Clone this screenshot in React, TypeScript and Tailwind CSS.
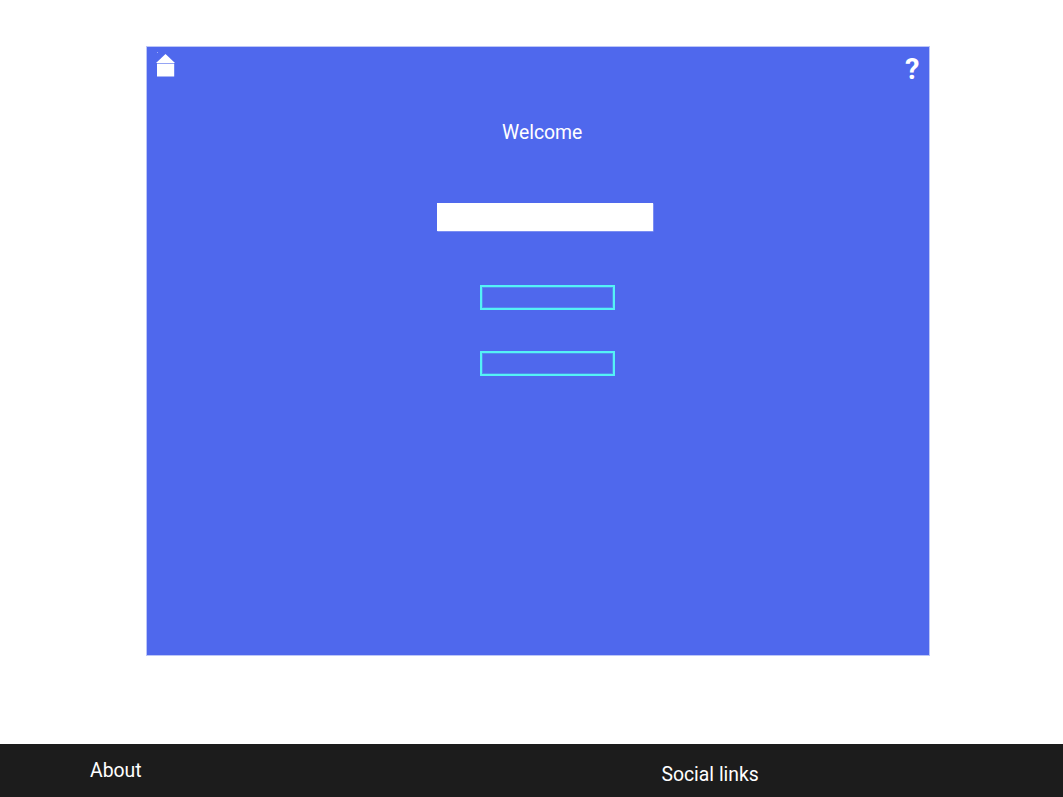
export default function App() {
  return (
    <div className="flex h-[797px] w-[1063px] flex-col overflow-hidden bg-white font-['Roboto',sans-serif] text-white">
      <main className="mt-[47px] ml-[147px] flex h-[608px] w-[782px] flex-col bg-[#4f68ed] shadow-[0_0_0_1px_#bcc6f8]">
        <header className="flex h-[76px] items-start justify-between pt-[7px] pr-[9.5px] pl-[9px]">
          <button aria-label="Home">
            <svg className="block h-[23px] w-[20px] overflow-visible" viewBox="0 0 20 23" fill="white">
              <path d="M9.5 0 L19 9.1 H0 Z" />
              <rect x="1" y="9.6" width="17.2" height="12.9" />
              <rect x="1" y="-2" width="1" height="1" opacity="0.45" />
            </svg>
          </button>
          <button className="text-[29px] leading-[30px] font-bold">?</button>
        </header>
        <h1 className="h-[18px] pl-[355px] text-[19.4px] leading-[19px] font-normal">Welcome</h1>
        <input aria-label="Name" className="mt-[62px] ml-[290px] h-[28px] w-[216px] bg-white px-2 text-black shadow-[0.5px_0.5px_0_0_#a7b4f7] outline-none" />
        <button aria-label="First option" className="mt-[54px] ml-[333px] h-[25px] w-[135px] border-2 border-[#54f2f6] shadow-[inset_0_0_0_1px_#508eed]" />
        <button aria-label="Second option" className="mt-[41px] ml-[333px] h-[25px] w-[135px] border-2 border-[#54f2f6] shadow-[inset_0_0_0_1px_#508eed]" />
      </main>
      <footer className="mt-[89px] flex h-[53px] items-start bg-[#1c1c1c] text-[19.4px] leading-[24px]">
        <a className="w-[661.4px] shrink-0 pt-[15px] pl-[90px]">About</a>
        <a className="pt-[19px]">Social links</a>
      </footer>
    </div>
  );
}
